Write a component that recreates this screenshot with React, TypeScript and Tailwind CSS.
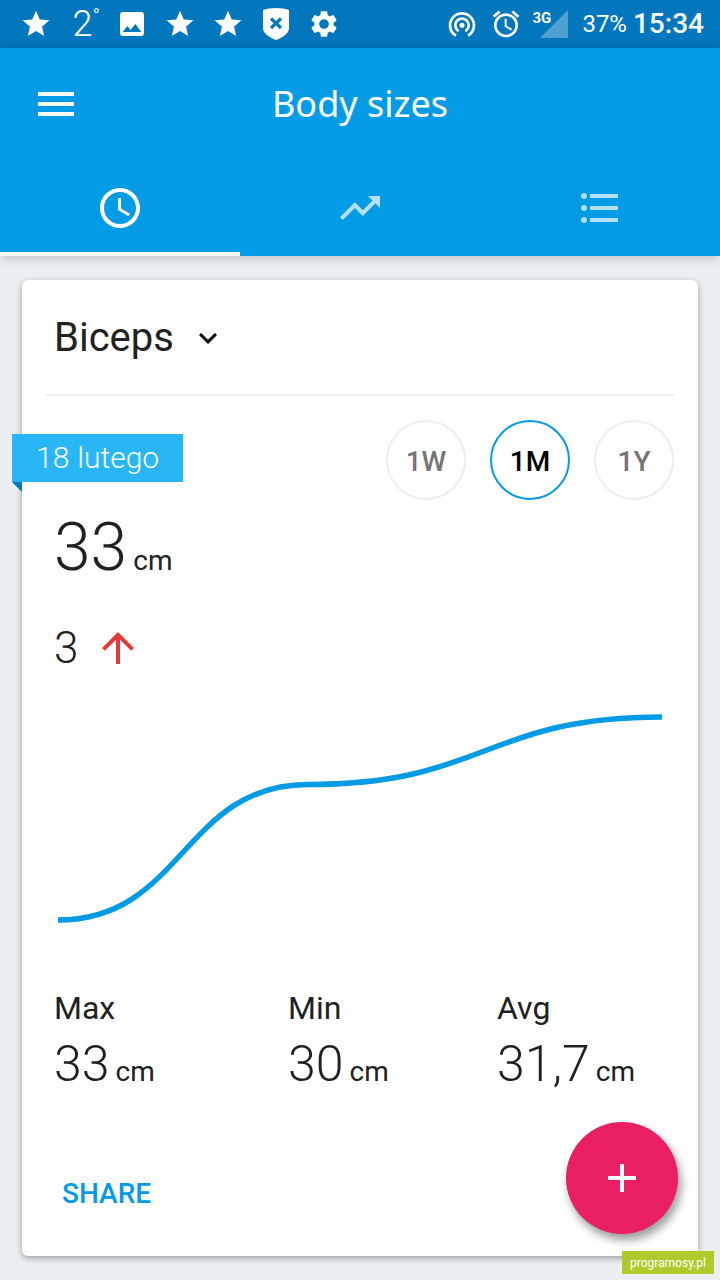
import { useState } from "react";

import {
  MdAccessTime,
  MdAdd,
  MdAlarm,
  MdArrowUpward,
  MdFormatListBulleted,
  MdImage,
  MdKeyboardArrowDown,
  MdMenu,
  MdSettings,
  MdStar,
  MdTrendingUp,
  MdWifiTethering,
} from "react-icons/md";

const TABS = [
  { id: "recent", label: "Recent", Icon: MdAccessTime },
  { id: "trend", label: "Trend", Icon: MdTrendingUp },
  { id: "list", label: "List", Icon: MdFormatListBulleted },
];

const RANGES = ["1W", "1M", "1Y"];

const STATS = [
  { label: "Max", value: "33" },
  { label: "Min", value: "30" },
  { label: "Avg", value: "31,7" },
];

const ShieldIcon = () => (
  <svg className="h-8 w-8" viewBox="0 0 32 32">
    <path
      d="M16 0C11 0 6.500.7 3 2v18c0 6 8 10 13 12 5-2 13-6 13-12V2C25.500.7 21 0 16 0z"
      fill="#fff"
    />
    <path d="M11 10.500l10 9.500M21 10.500L11 20" stroke="#0277bd" strokeWidth="3.200" />
  </svg>
);

const SignalIcon = () => (
  <div className="relative h-8 w-9">
    <svg className="h-8 w-9" viewBox="0 0 36 32">
      <path d="M34 2v28H6z" fill="#fff" fillOpacity="0.3" />
    </svg>
    <span className="absolute top-0 -left-0.5 text-[15px] leading-5 font-bold">3G</span>
  </div>
);

const StatusBar = () => (
  <div className="flex h-12 items-center justify-between bg-[#0277bd] pr-4 pl-5 text-white">
    <div className="flex items-center gap-4">
      <MdStar className="size-8" />
      <span className="flex w-8 justify-end text-4xl font-light">
        2<span className="text-xl leading-6">°</span>
      </span>
      <MdImage className="size-8" />
      <MdStar className="size-8" />
      <MdStar className="size-8" />
      <ShieldIcon />
      <MdSettings className="size-8" />
    </div>
    <div className="flex items-center">
      <MdWifiTethering className="mr-3 size-8" />
      <MdAlarm className="mr-3 size-8" />
      <SignalIcon />
      <span className="ml-3 text-2xl">37%</span>
      <span className="ml-1.5 text-[28px] font-medium">15:34</span>
    </div>
  </div>
);

interface TabBarProps {
  active: string;
  onChange(id: string): void;
}

const TabBar = ({ active, onChange }: TabBarProps) => (
  <nav className="grid h-24 grid-cols-3">
    {TABS.map(({ id, label, Icon }) => (
      <button
        aria-label={label}
        className={
          id === active
            ? "flex items-center justify-center border-y-4 border-t-transparent border-b-white text-white"
            : "flex items-center justify-center text-white/70"
        }
        key={id}
        onClick={() => onChange(id)}
        type="button"
      >
        <Icon className="size-12" />
      </button>
    ))}
  </nav>
);

const TrendChart = () => (
  <svg className="w-full" viewBox="0 0 604 212">
    <path
      d="M0 208C125 208 125 72.500 250 72.500C427 72.500 427 5 604 5"
      fill="none"
      stroke="#039be5"
      strokeWidth="5.500"
    />
  </svg>
);

const MeasurementCard = () => {
  const [part, setPart] = useState("Biceps");
  const [range, setRange] = useState("1M");

  return (
    <section className="relative flex grow flex-col rounded-md bg-white px-6 shadow-[0_2px_6px_rgba(0,0,0,0.35)]">
      <div className="flex h-[116px] items-center border-b-2 border-[#ebeff2] px-2 pt-0.5">
        <div className="relative">
          <select
            aria-label="Body part"
            className="h-16 appearance-none bg-transparent pr-[52px] text-[40px] leading-[56px] outline-none"
            onChange={(e) => setPart(e.target.value)}
            value={part}
          >
            <option>Biceps</option>
          </select>
          <MdKeyboardArrowDown className="pointer-events-none absolute top-3.5 right-0 size-9 text-black" />
        </div>
      </div>

      <div className="mt-6 flex items-start justify-between">
        <div className="mt-3.5 -ml-[34px]">
          <div className="flex h-12 items-center gap-2 bg-[#29b6f6] px-6 text-3xl font-light text-white">
            <span>18</span>
            <span>lutego</span>
          </div>
          <svg className="size-[10px]" viewBox="0 0 10 10">
            <path d="M0 0h10v10z" fill="#0277bd" />
          </svg>
        </div>
        <div className="flex gap-6">
          {RANGES.map((item) => (
            <button
              className={
                item === range
                  ? "size-20 rounded-full border-2 border-[#039be5] pt-1 text-[28px] font-medium text-black"
                  : "size-20 rounded-full border-2 border-[#ebeff2] pt-1 text-[28px] font-medium text-[#757575]"
              }
              key={item}
              onClick={() => setRange(item)}
              type="button"
            >
              {item}
            </button>
          ))}
        </div>
      </div>

      <div className="mt-2 flex items-baseline gap-1.5 px-2">
        <span className="text-[66px] leading-20 font-light">33</span>
        <span className="text-[28px]">cm</span>
      </div>
      <div className="mt-9 flex items-center gap-4 px-2">
        <span className="text-[44px] leading-12 font-light">3</span>
        <MdArrowUpward className="size-12 text-[#e53935]" />
      </div>

      <div className="mt-10 px-3">
        <TrendChart />
      </div>

      <dl className="mt-16 grid grid-cols-[234fr_209fr_169fr] px-2">
        {STATS.map(({ label, value }) => (
          <div key={label}>
            <dt className="text-[32px] leading-10">{label}</dt>
            <dd className="flex items-baseline gap-1.5">
              <span className="text-[50px] leading-18 font-light">{value}</span>
              <span className="text-[28px]">cm</span>
            </dd>
          </div>
        ))}
      </dl>

      <div className="mt-auto flex h-[126px] items-center px-4 pt-0.5">
        <button className="text-[28px] font-medium text-[#039be5]" type="button">
          SHARE
        </button>
      </div>

      <button
        aria-label="Add measurement"
        className="absolute right-5 bottom-[22px] flex size-28 items-center justify-center rounded-full bg-[#e91e63] text-white shadow-[3px_6px_10px_rgba(0,0,0,0.4)]"
        type="button"
      >
        <MdAdd className="size-12" />
      </button>
    </section>
  );
};

export default function App() {
  const [tab, setTab] = useState("recent");

  return (
    <div className="relative flex min-h-screen flex-col bg-[#ebeff2] font-[Roboto,sans-serif] text-[#212121]">
      <StatusBar />
      <header className="bg-[#039be5] text-white shadow-[0_2px_10px_rgba(0,0,0,0.2)]">
        <div className="grid h-28 grid-cols-[1fr_auto_1fr] items-center px-8">
          <button aria-label="Menu" className="justify-self-start" type="button">
            <MdMenu className="size-12" />
          </button>
          <h1 className="font-['Noto_Sans',sans-serif] text-4xl font-normal">Body sizes</h1>
        </div>
        <TabBar active={tab} onChange={setTab} />
      </header>
      <main className="flex grow flex-col px-[22px] py-6">
        <MeasurementCard />
      </main>
      <a
        className="absolute right-1.5 bottom-1.5 flex h-[23px] items-center bg-[#afca2b] px-2 text-xs text-white"
        href="#programosy"
      >
        programosy.pl
      </a>
    </div>
  );
}
